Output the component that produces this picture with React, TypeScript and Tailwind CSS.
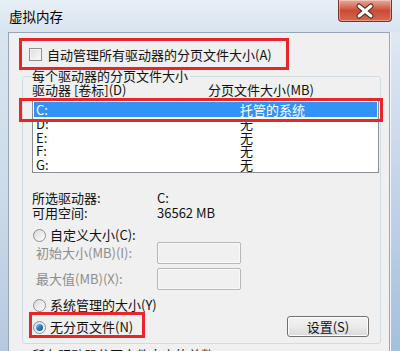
import type { ReactNode } from "react";

const drives = [
  { name: "D:", size: "无" },
  { name: "E:", size: "无" },
  { name: "F:", size: "无" },
  { name: "G:", size: "无" },
];

function CloseButton() {
  return (
    <div className="mr-[8px] h-[22px] w-[54px] rounded-b-[4px] border border-t-0 border-[#7d3127] bg-gradient-to-b from-[#eaa99b] via-[#c94b37] to-[#d6694f] shadow-[inset_0_0_0_1px_rgba(255,255,255,0.35)]">
      <svg width="52" height="21" viewBox="0 0 52 21">
        <path d="M20 6 L32 16 M32 6 L20 16" stroke="#4b231c" strokeWidth="5" strokeLinecap="round" />
        <path d="M20 6 L32 16 M32 6 L20 16" stroke="#ffffff" strokeWidth="3" strokeLinecap="round" />
      </svg>
    </div>
  );
}

function Radio({ checked }: { checked?: boolean }) {
  return (
    <span className="flex h-[13px] w-[13px] shrink-0 items-center justify-center rounded-full border border-[#8e8f8f] bg-gradient-to-br from-[#d9d9d9] to-[#ffffff]">
      {checked && (
        <span className="h-[7px] w-[7px] rounded-full bg-gradient-to-br from-[#8fd0f5] via-[#2a7fc4] to-[#0f4f8a]" />
      )}
    </span>
  );
}

function Field() {
  return (
    <div className="h-[22px] w-[84px] rounded-[2px] border border-[#b7b7b7] bg-[#f0f0f0] shadow-[inset_0_0_0_1px_#fafafa]" />
  );
}

function Redbox({ className }: { className: string }) {
  return <div className={`pointer-events-none absolute border-[3px] border-[#e6262b] ${className}`} />;
}

function Line({ children, className = "" }: { children: ReactNode; className?: string }) {
  return <div className={`flex h-[15px] items-center leading-[15px] ${className}`}>{children}</div>;
}

export default function App() {
  return (
    <div className="relative h-[351px] w-[400px] overflow-hidden bg-[#dfe8f2] font-['Noto_Sans_CJK_SC',sans-serif] text-[13px] text-[#111111]">
      {/* Title bar */}
      <div className="flex h-[32px] items-start justify-between bg-gradient-to-b from-[#e7eef6] to-[#d9e4f0]">
        <span className="ml-[9px] mt-[7px] text-[13.5px] leading-[18px] text-black">虚拟内存</span>
        <CloseButton />
      </div>

      <div className="flex h-[319px]">
        {/* left frame */}
        <div className="w-[8px] bg-gradient-to-b from-[#d9e4f0] via-[#cddbea] to-[#b6c9df]" />

        {/* dialog body */}
        <div className="flex-1 border-l border-r border-t border-[#97a6b7] bg-[#f0f0f0]">
          <div className="mt-[14px] flex h-[15px] items-center gap-[5px] pl-[20px] leading-[15px]">
            <span className="h-[13px] w-[13px] border border-[#8e8f8f] bg-gradient-to-br from-[#dcdcdc] to-[#fbfbfb] shadow-[inset_0_0_0_1px_#f4f4f4]" />
            <span>自动管理所有驱动器的分页文件大小(A)</span>
          </div>

          {/* group box */}
          <div className="ml-[13px] mr-[8px] mt-[14px] rounded-[3px] border border-[#d3dbe2] pb-[5px] pl-[9px] pr-[1px]">
            <div className="-mt-[8px] h-[14px] w-fit bg-[#f0f0f0] pr-[2px] leading-[14px]">每个驱动器的分页文件大小</div>
            <div className="flex h-[14px] items-center leading-[14px]">
              <span className="w-[176px]">驱动器 [卷标](D)</span>
              <span>分页文件大小(MB)</span>
            </div>

            {/* drive list */}
            <div className="mt-[3px] border border-[#8a8f96] bg-white px-[1px] py-[1px]">
              <div className="flex h-[15px] items-center bg-[#3392f5] pl-[2px] leading-[15px] text-white">
                <span className="w-[204px]">C:</span>
                <span>托管的系统</span>
              </div>
              {drives.map((d) => (
                <div key={d.name} className="flex h-[13.5px] items-center pl-[2px] leading-[13.5px]">
                  <span className="w-[204px]">{d.name}</span>
                  <span>{d.size}</span>
                </div>
              ))}
            </div>

            <Line className="mt-[17px]">
              <span className="w-[125px]">所选驱动器:</span>
              <span>C:</span>
            </Line>
            <Line>
              <span className="w-[125px]">可用空间:</span>
              <span>36562 MB</span>
            </Line>

            <div className="ml-[1px] mt-[8px] flex h-[14px] items-center gap-[4px] leading-[14px]">
              <Radio />
              <span>自定义大小(C):</span>
            </div>
            <div className="flex h-[22px] items-center">
              <span className="ml-[4px] w-[121px] text-[#8d8d8d]">初始大小(MB)(I):</span>
              <Field />
            </div>
            <div className="mt-[4px] flex h-[22px] items-center">
              <span className="ml-[4px] w-[121px] text-[#8d8d8d]">最大值(MB)(X):</span>
              <Field />
            </div>

            <div className="ml-[1px] mt-[8px] flex h-[14px] items-center gap-[4px] leading-[14px]">
              <Radio />
              <span>系统管理的大小(Y)</span>
            </div>
            <div className="ml-[1px] mt-[4px] flex h-[22px] items-center gap-[4px]">
              <Radio checked />
              <span>无分页文件(N)</span>
              <button className="-mt-[2px] ml-auto mr-[10px] h-[21px] w-[82px] rounded-[3px] border border-[#707070] bg-gradient-to-b from-[#f3f3f3] via-[#ebebeb] to-[#d9d9d9] text-[13px] leading-[19px] shadow-[inset_0_0_0_1px_#fcfcfc]">
                设置(S)
              </button>
            </div>
          </div>

          <div className="ml-[23px] mt-[3px] leading-[15px]">所有驱动器分页文件大小的总数</div>
        </div>

        {/* right frame */}
        <div className="w-[10px] border-l border-[#f4f7fb] bg-gradient-to-b from-[#dfe8f2] via-[#c3d4e8] to-[#a6bfdb]" />
      </div>

      {/* annotations */}
      <Redbox className="left-[19px] top-[38px] h-[32px] w-[270px]" />
      <Redbox className="left-[19px] top-[98px] h-[24px] w-[364px]" />
      <Redbox className="left-[29px] top-[312px] h-[26px] w-[116px]" />
    </div>
  );
}
